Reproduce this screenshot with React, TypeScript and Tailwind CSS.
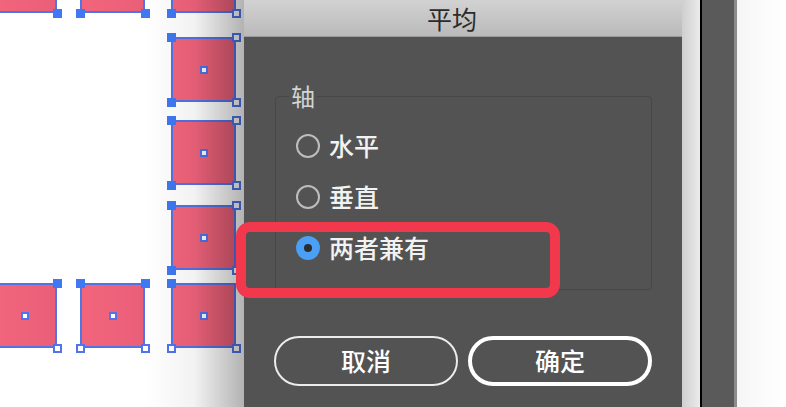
import React from 'react'

type H = 'f' | 'h' | null

const squares: { x: number; y: number; h: [H, H, H, H] }[] = [
  { x: -8, y: -52, h: [null, null, null, 'f'] },
  { x: 80, y: -52, h: [null, null, 'f', 'f'] },
  { x: 171, y: -52, h: [null, null, 'f', 'h'] },
  { x: 171, y: 37, h: ['f', 'h', 'f', 'h'] },
  { x: 171, y: 120, h: ['f', 'h', 'f', 'h'] },
  { x: 171, y: 205, h: ['f', 'h', 'f', 'h'] },
  { x: -8, y: 283, h: [null, 'f', null, 'h'] },
  { x: 80, y: 283, h: ['f', 'f', 'h', 'h'] },
  { x: 171, y: 283, h: ['f', null, 'h', 'h'] },
]

const SIZE = 65

const Handle: React.FC<{ kind: H; x: number; y: number }> = ({ kind, x, y }) => {
  if (!kind) return null
  return (
    <div
      className={
        kind === 'f'
          ? 'absolute w-[9px] h-[9px] bg-[#3f78f2]'
          : 'absolute w-[9px] h-[9px] bg-white border-2 border-[#4f74ec]'
      }
      style={{ left: x - 4, top: y - 4 }}
    />
  )
}

const Canvas: React.FC = () => (
  <div className="relative w-[244px] h-full bg-white overflow-hidden shrink-0">
    {squares.map((s, i) => (
      <div
        key={i}
        className="absolute border-2 border-[#5273e6] bg-gradient-to-r from-[#f2657c] to-[#ea5f78]"
        style={{ left: s.x, top: s.y, width: SIZE, height: SIZE }}
      >
        <div className="absolute left-1/2 top-1/2 -translate-x-1/2 -translate-y-1/2 w-[8px] h-[8px] bg-white border-2 border-[#4f74ec]" />
      </div>
    ))}
    {squares.map((s, i) => (
      <React.Fragment key={'h' + i}>
        <Handle kind={s.h[0]} x={s.x} y={s.y} />
        <Handle kind={s.h[1]} x={s.x + SIZE} y={s.y} />
        <Handle kind={s.h[2]} x={s.x} y={s.y + SIZE} />
        <Handle kind={s.h[3]} x={s.x + SIZE} y={s.y + SIZE} />
      </React.Fragment>
    ))}
    <div className="absolute right-0 top-0 h-full w-[100px] bg-gradient-to-r from-transparent via-black/5 to-black/30 pointer-events-none" />
  </div>
)

const Radio: React.FC<{ label: string; checked?: boolean }> = ({ label, checked }) => (
  <div className="flex items-center h-[51px] gap-[9px]">
    {checked ? (
      <span className="w-[24px] h-[24px] rounded-full bg-[#4b9ff4] flex items-center justify-center">
        <span className="w-[8px] h-[8px] rounded-full bg-[#2c2c2c]" />
      </span>
    ) : (
      <span className="w-[24px] h-[24px] rounded-full border-2 border-[#bdbdbd]" />
    )}
    <span className="text-[25px] leading-none font-medium text-[#f2f2f2]">{label}</span>
  </div>
)

const Dialog: React.FC = () => (
  <div className="w-[438px] h-full flex flex-col shrink-0">
    <div className="h-[37px] flex items-center justify-center pr-[22px] bg-gradient-to-b from-[#d2d2d2] to-[#bababa] border-b border-[#9c9c9c]">
      <span className="text-[25px] leading-none text-[#2b2b2b]">平均</span>
    </div>
    <div className="flex-1 bg-[#535353] pt-[47px]">
      <fieldset className="ml-[31px] w-[377px] border border-[#474747] rounded-[4px] pl-[20px] pt-[12px] pb-[16px]">
        <legend className="-ml-[7px] px-[2px] text-[24px] leading-[24px] text-[#d4d4d4]">轴</legend>
        <Radio label="水平" />
        <Radio label="垂直" />
        <Radio label="两者兼有" checked />
      </fieldset>
      <div className="flex gap-[10px] ml-[30px] mt-[46px]">
        <button className="w-[184px] h-[50px] rounded-full border-2 border-[#ececec] text-[25px] font-medium text-white flex items-center justify-center">
          取消
        </button>
        <button className="w-[184px] h-[50px] rounded-full border-4 border-white text-[25px] font-medium text-white flex items-center justify-center">
          确定
        </button>
      </div>
    </div>
  </div>
)

export default function App() {
  return (
    <div
      className="relative w-[786px] h-[407px] flex overflow-hidden bg-white"
      style={{ fontFamily: '"Noto Sans CJK SC", "Noto Sans", sans-serif' }}
    >
      <Canvas />
      <Dialog />
      <div className="w-[18px] h-full bg-gradient-to-r from-[#cfcfcf] to-[#ebebeb] shrink-0" />
      <div className="w-[2px] h-full bg-black shrink-0" />
      <div className="w-[32px] h-full bg-[#5a5a5a] shrink-0" />
      <div className="w-[3px] h-full bg-[#8c8c8c] shrink-0" />
      <div className="flex-1 h-full bg-gradient-to-r from-[#f6f6f6] to-white" />
      <div className="absolute left-[236px] top-[222px] w-[324px] h-[76px] border-[10px] border-[#f2384d] rounded-[14px] pointer-events-none" />
    </div>
  )
}
